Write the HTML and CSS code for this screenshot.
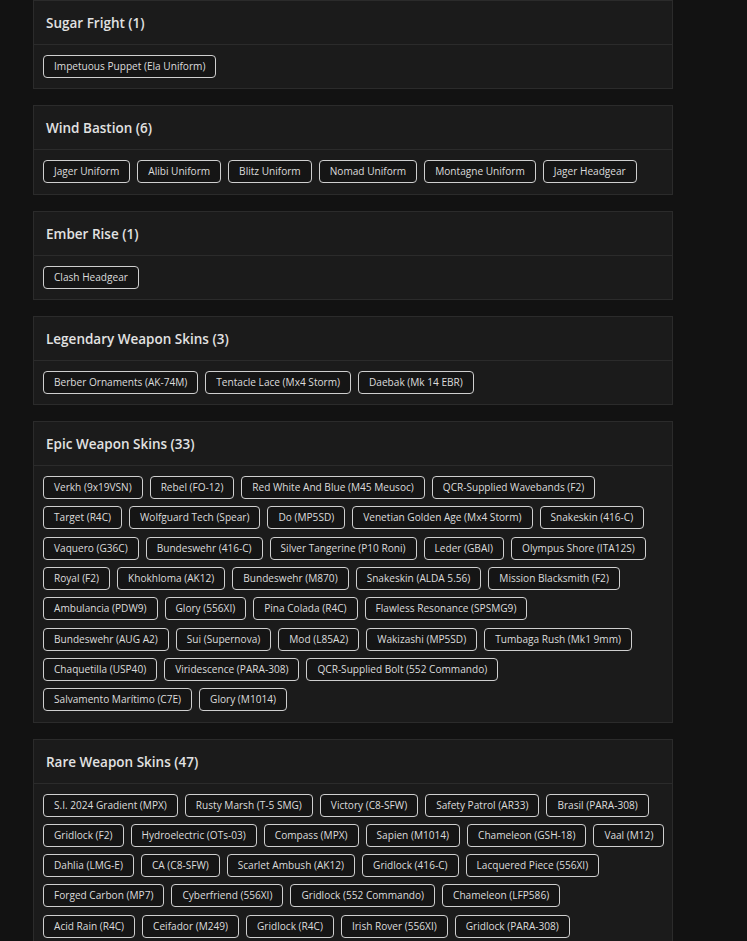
FILE: index.html
```html
<!DOCTYPE html>
<html lang="en">
<head>
  <meta charset="UTF-8" />
  <meta name="viewport" content="width=device-width, initial-scale=1.0"/>
  <title>Collection</title>
  <link rel="stylesheet" href="styles.css">
</head>
<body>

  <div class="page">

    <!-- Sugar Fright -->
    <div class="card">
      <div class="card-header">Sugar Fright (1)</div>
      <div class="card-body">
        <div class="tag-row">
          <span class="tag">Impetuous Puppet (Ela Uniform)</span>
        </div>
      </div>
    </div>

    <!-- Wind Bastion -->
    <div class="card">
      <div class="card-header">Wind Bastion (6)</div>
      <div class="card-body">
        <div class="tag-row">
          <span class="tag">Jager Uniform</span>
          <span class="tag">Alibi Uniform</span>
          <span class="tag">Blitz Uniform</span>
          <span class="tag">Nomad Uniform</span>
          <span class="tag">Montagne Uniform</span>
          <span class="tag">Jager Headgear</span>
        </div>
      </div>
    </div>

    <!-- Ember Rise -->
    <div class="card">
      <div class="card-header">Ember Rise (1)</div>
      <div class="card-body">
        <div class="tag-row">
          <span class="tag">Clash Headgear</span>
        </div>
      </div>
    </div>

    <!-- Legendary -->
    <div class="card">
      <div class="card-header">Legendary Weapon Skins (3)</div>
      <div class="card-body">
        <div class="tag-row">
          <span class="tag">Berber Ornaments (AK-74M)</span>
          <span class="tag">Tentacle Lace (Mx4 Storm)</span>
          <span class="tag">Daebak (Mk 14 EBR)</span>
        </div>
      </div>
    </div>

    <!-- Epic -->
    <div class="card">
      <div class="card-header">Epic Weapon Skins (33)</div>
      <div class="card-body">
        <div class="tag-row">
          <span class="tag">Verkh (9x19VSN)</span>
          <span class="tag">Rebel (FO-12)</span>
          <span class="tag">Red White And Blue (M45 Meusoc)</span>
          <span class="tag">QCR-Supplied Wavebands (F2)</span>
        </div>
        <div class="tag-row">
          <span class="tag">Target (R4C)</span>
          <span class="tag">Wolfguard Tech (Spear)</span>
          <span class="tag">Do (MP5SD)</span>
          <span class="tag">Venetian Golden Age (Mx4 Storm)</span>
          <span class="tag">Snakeskin (416-C)</span>
        </div>
        <div class="tag-row">
          <span class="tag">Vaquero (G36C)</span>
          <span class="tag">Bundeswehr (416-C)</span>
          <span class="tag">Silver Tangerine (P10 Roni)</span>
          <span class="tag">Leder (GBAI)</span>
          <span class="tag">Olympus Shore (ITA12S)</span>
        </div>
        <div class="tag-row">
          <span class="tag">Royal (F2)</span>
          <span class="tag">Khokhloma (AK12)</span>
          <span class="tag">Bundeswehr (M870)</span>
          <span class="tag">Snakeskin (ALDA 5.56)</span>
          <span class="tag">Mission Blacksmith (F2)</span>
        </div>
        <div class="tag-row">
          <span class="tag">Ambulancia (PDW9)</span>
          <span class="tag">Glory (556XI)</span>
          <span class="tag">Pina Colada (R4C)</span>
          <span class="tag">Flawless Resonance (SPSMG9)</span>
        </div>
        <div class="tag-row">
          <span class="tag">Bundeswehr (AUG A2)</span>
          <span class="tag">Sui (Supernova)</span>
          <span class="tag">Mod (L85A2)</span>
          <span class="tag">Wakizashi (MP5SD)</span>
          <span class="tag">Tumbaga Rush (Mk1 9mm)</span>
        </div>
        <div class="tag-row">
          <span class="tag">Chaquetilla (USP40)</span>
          <span class="tag">Viridescence (PARA-308)</span>
          <span class="tag">QCR-Supplied Bolt (552 Commando)</span>
        </div>
        <div class="tag-row">
          <span class="tag">Salvamento Marítimo (C7E)</span>
          <span class="tag">Glory (M1014)</span>
        </div>
      </div>
    </div>

    <!-- Rare -->
    <div class="card">
      <div class="card-header">Rare Weapon Skins (47)</div>
      <div class="card-body">
        <div class="tag-row">
          <span class="tag">S.I. 2024 Gradient (MPX)</span>
          <span class="tag">Rusty Marsh (T-5 SMG)</span>
          <span class="tag">Victory (C8-SFW)</span>
          <span class="tag">Safety Patrol (AR33)</span>
          <span class="tag">Brasil (PARA-308)</span>
        </div>
        <div class="tag-row">
          <span class="tag">Gridlock (F2)</span>
          <span class="tag">Hydroelectric (OTs-03)</span>
          <span class="tag">Compass (MPX)</span>
          <span class="tag">Sapien (M1014)</span>
          <span class="tag">Chameleon (GSH-18)</span>
          <span class="tag">Vaal (M12)</span>
        </div>
        <div class="tag-row">
          <span class="tag">Dahlia (LMG-E)</span>
          <span class="tag">CA (C8-SFW)</span>
          <span class="tag">Scarlet Ambush (AK12)</span>
          <span class="tag">Gridlock (416-C)</span>
          <span class="tag">Lacquered Piece (556XI)</span>
        </div>
        <div class="tag-row">
          <span class="tag">Forged Carbon (MP7)</span>
          <span class="tag">Cyberfriend (556XI)</span>
          <span class="tag">Gridlock (552 Commando)</span>
          <span class="tag">Chameleon (LFP586)</span>
        </div>
        <div class="tag-row">
          <span class="tag">Acid Rain (R4C)</span>
          <span class="tag">Ceifador (M249)</span>
          <span class="tag">Gridlock (R4C)</span>
          <span class="tag">Irish Rover (556XI)</span>
          <span class="tag">Gridlock (PARA-308)</span>
        </div>
      </div>
    </div>

  </div>

</body>
</html>
```

FILE: styles.css
```css
body {
  font-family: 'Open Sans', 'Noto Sans', sans-serif;
  background-color: #121212;
  color: #e4e4e4;
  margin: 0;
  padding: 0;
}

.page {
  width: 640px;
  margin-left: 33px;
}

.card {
  background-color: #1b1b1b;
  border: 1px solid #2b2b2b;
  margin-bottom: 16px;
}

.card-header {
  padding: 13px 12px 12px;
  font-size: 13.5px;
  font-weight: 600;
  line-height: 18px;
  color: #e2e2e2;
  border-bottom: 1px solid #2b2b2b;
}

.card-body {
  display: flex;
  flex-direction: column;
  gap: 7.3px;
  padding: 10px 9px 10.3px;
}

.tag-row {
  display: flex;
  gap: 7px;
}

.tag {
  display: inline-block;
  padding: 4px 10px;
  font-size: 10.1px;
  line-height: 13px;
  color: #dcdcdc;
  background-color: #151515;
  border: 1px solid #cfcfcf;
  border-radius: 4px;
  white-space: nowrap;
}
```
